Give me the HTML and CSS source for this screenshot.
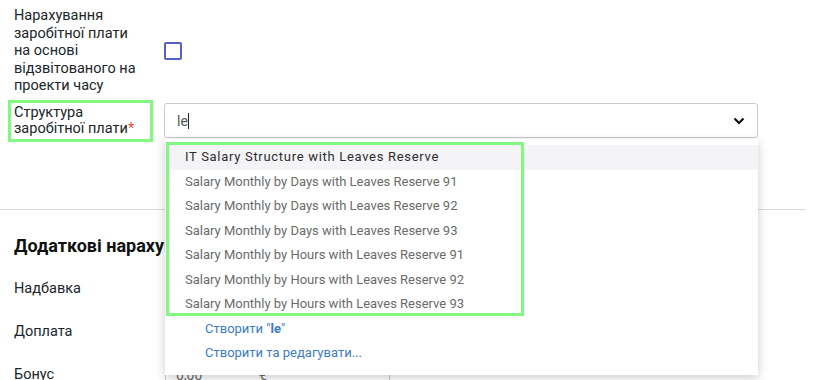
FILE: index.html
```html
<!DOCTYPE html>
<html lang="uk">
<head>
    <meta charset="UTF-8">
    <title>Структура заробітної плати</title>
    <link rel="stylesheet" href="styles.css">
</head>
<body>
    <div class="sheet">
        <div class="row row-check">
            <div class="label label-wrap">Нарахування заробітної плати на основі відзвітованого на проекти часу</div>
            <div class="field">
                <span class="checkbox"></span>
            </div>
        </div>

        <div class="row row-struct">
            <div class="label label-marked">Структура заробітної плати<span class="req">*</span></div>
            <div class="field field-select">
                <div class="select">
                    <span class="typed">le</span><span class="caret"></span>
                    <svg class="chevron" width="12" height="8" viewBox="0 0 12 8">
                        <path d="M1.5 1.5 L6 6 L10.5 1.5" fill="none" stroke="#111" stroke-width="2.2"/>
                    </svg>
                </div>

                <div class="dropdown">
                    <div class="marker"></div>
                    <div class="option active">IT Salary Structure with Leaves Reserve</div>
                    <div class="option">Salary Monthly by Days with Leaves Reserve 91</div>
                    <div class="option">Salary Monthly by Days with Leaves Reserve 92</div>
                    <div class="option">Salary Monthly by Days with Leaves Reserve 93</div>
                    <div class="option">Salary Monthly by Hours with Leaves Reserve 91</div>
                    <div class="option">Salary Monthly by Hours with Leaves Reserve 92</div>
                    <div class="option">Salary Monthly by Hours with Leaves Reserve 93</div>
                    <div class="option create">Створити "<b>le</b>"</div>
                    <div class="option create">Створити та редагувати...</div>
                </div>
            </div>
        </div>

        <hr class="divider">

        <h2>Додаткові нарахування</h2>

        <div class="row row-money">
            <div class="label">Надбавка</div>
            <div class="field"><div class="money"><span class="amount">0,00</span><span class="cur">€</span></div></div>
        </div>
        <div class="row row-money">
            <div class="label">Доплата</div>
            <div class="field"><div class="money"><span class="amount">0,00</span><span class="cur">€</span></div></div>
        </div>
        <div class="row row-money">
            <div class="label">Бонус</div>
            <div class="field"><div class="money"><span class="amount">0,00</span><span class="cur">€</span></div></div>
        </div>
    </div>
</body>
</html>
```

FILE: styles.css
```css
body {
    margin: 0;
    font-family: Roboto, "Noto Sans", sans-serif;
    color: #212529;
    background: #fff;
    overflow: hidden;
}

.sheet {
    width: 805px;
}

.row {
    display: grid;
    grid-template-columns: 164px 594px;
    align-items: center;
}

.label {
    padding-left: 14px;
    font-size: 14.5px;
    line-height: 17.5px;
}

.label-wrap {
    width: 126px;
}

.row-check {
    margin-top: 7px;
}

.checkbox {
    display: block;
    width: 14px;
    height: 14px;
    border: 2px solid #5561c4;
    border-radius: 2px;
}

.row-struct {
    margin-top: 8px;
}

.label-marked {
    margin-left: 11px;
    width: 139px;
    box-sizing: border-box;
    padding: 2px 0 2px 3px;
    line-height: 16px;
    outline: 3px solid #82f882;
}

.req {
    color: #e04848;
}

.field-select {
    position: relative;
}

.select {
    height: 35px;
    box-sizing: border-box;
    border: 1px solid #c9c9d1;
    border-radius: 3px;
    display: flex;
    align-items: center;
    padding: 0 12px;
    font-size: 14px;
}

.typed {
    color: #555;
}

.caret {
    width: 1px;
    height: 16px;
    background: #222;
}

.chevron {
    margin-left: auto;
}

.dropdown {
    position: absolute;
    top: 36px;
    left: 1px;
    right: 0;
    z-index: 5;
    background: #fff;
    padding: 6px 0 9px;
    box-shadow: 0 3px 10px rgba(0, 0, 0, 0.2);
}

.marker {
    position: absolute;
    left: 1px;
    top: 3px;
    width: 352px;
    height: 168px;
    border: 3px solid #82f882;
    pointer-events: none;
}

.option {
    height: 24.5px;
    line-height: 24.5px;
    padding-left: 20px;
    font-size: 13px;
    color: #6b6b6b;
    white-space: nowrap;
}

.option.active {
    background: #f4f4f6;
    color: #2d2d2d;
    letter-spacing: 0.7px;
}

.option.create {
    padding-left: 40px;
    color: #3c7cc4;
}

.divider {
    margin: 70px 0 0;
    border: none;
    border-top: 1px solid #dcdcdc;
}

h2 {
    margin: 25px 0 15px 14px;
    font-size: 18px;
    line-height: 22px;
    font-weight: bold;
    color: #111;
}

.row-money {
    margin-bottom: 8px;
}

.money {
    width: 225px;
    height: 35px;
    margin-left: 1px;
    box-sizing: border-box;
    border: 1px solid #c9c9d1;
    border-radius: 3px;
    display: flex;
    align-items: center;
    font-size: 14px;
    color: #666;
}

.amount {
    padding-left: 10px;
    width: 83px;
}
```
